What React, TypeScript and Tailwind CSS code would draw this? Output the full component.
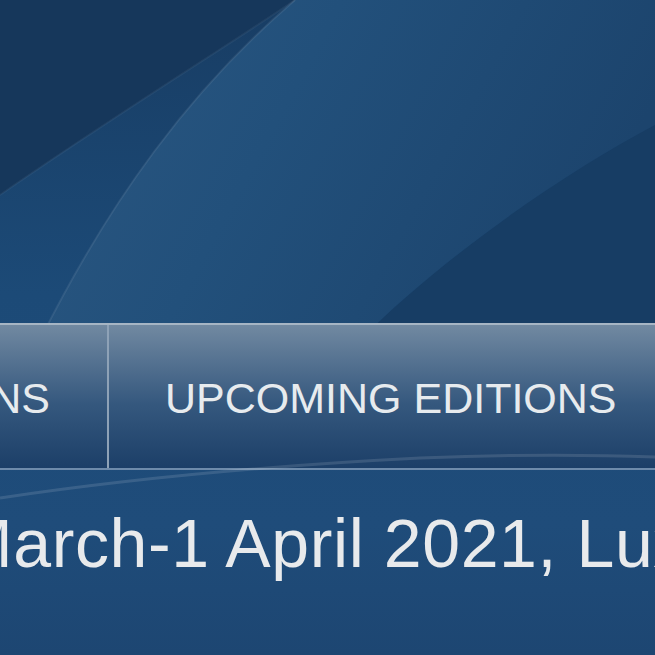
export default function App() {
    return (
        <div className="relative w-[655px] h-[655px] overflow-hidden bg-[#1c466f] font-['Liberation_Sans',Arial,sans-serif]">
            <svg
                className="absolute inset-0"
                width="655"
                height="655"
                viewBox="0 0 655 655"
            >
                <defs>
                    <linearGradient id="base" x1="0" y1="0" x2="0" y2="1">
                        <stop offset="0" stopColor="#183d64" />
                        <stop offset="0.45" stopColor="#1c4a77" />
                        <stop offset="0.8" stopColor="#1f4c7a" />
                        <stop offset="1" stopColor="#1d4672" />
                    </linearGradient>
                    <linearGradient id="band" x1="0" y1="0" x2="1" y2="0.3">
                        <stop offset="0" stopColor="#2b5781" />
                        <stop offset="0.45" stopColor="#22507b" />
                        <stop offset="1" stopColor="#1c446d" />
                    </linearGradient>
                </defs>
                <rect width="655" height="655" fill="url(#base)" />
                <path d="M0,0 H295 C240,38 120,112 0,195 Z" fill="#16375b" />
                <path
                    d="M295,0 H655 V125 C560,175 440,260 360,340 L40,340 C110,200 190,90 295,0 Z"
                    fill="url(#band)"
                />
                <path d="M655,125 C560,175 440,260 360,340 L655,340 Z" fill="#173d64" />
                <path
                    d="M295,0 C190,90 110,200 40,340"
                    stroke="#ffffff"
                    strokeOpacity="0.08"
                    strokeWidth="2"
                    fill="none"
                />
                <path
                    d="M0,195 C120,112 240,38 295,0"
                    stroke="#ffffff"
                    strokeOpacity="0.05"
                    strokeWidth="2"
                    fill="none"
                />
            </svg>

            <div className="relative flex flex-col pt-[323px]">
                <nav className="flex h-[147px] border-t-2 border-b-2 border-t-[#a6b5c4] border-b-[#6e8bab] bg-linear-to-b from-[#7189a1] via-[#35587e] via-55% to-[#1c3f68] text-[43px] leading-none text-[#e7ebee]">
                    <div className="w-[109px] shrink-0 flex justify-end items-center overflow-hidden pr-[57px] pt-[3px] border-r-2 border-r-[#8ea2b7] whitespace-nowrap">
                        PAST EDITIONS
                    </div>
                    <div className="shrink-0 flex items-center pl-[56px] pr-[57px] pt-[3px] border-r-2 border-r-[#8ea2b7] whitespace-nowrap">
                        UPCOMING EDITIONS
                    </div>
                </nav>

                <p className="mt-[39px] -ml-[44px] whitespace-nowrap text-[68px] leading-none tracking-[0.6px] text-[#e8eaec]">
                    March-1 April 2021, Luxembourg
                </p>
            </div>

            <svg
                className="absolute inset-0 pointer-events-none"
                width="655"
                height="655"
                viewBox="0 0 655 655"
            >
                <path
                    d="M0,498 C120,480 260,466 420,458 C520,454 600,455 655,457"
                    stroke="#ffffff"
                    strokeOpacity="0.12"
                    strokeWidth="3"
                    fill="none"
                />
            </svg>
        </div>
    );
}
